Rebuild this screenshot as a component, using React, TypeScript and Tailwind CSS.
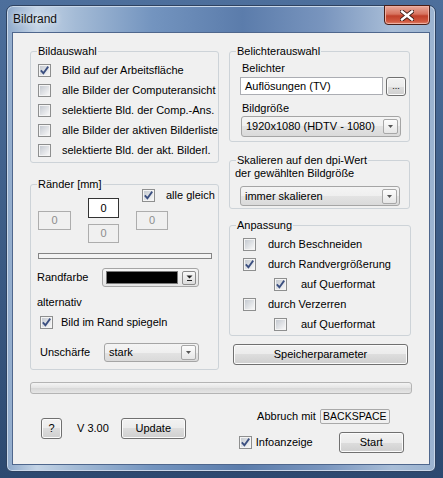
import type { ReactNode } from 'react';

function Check({ checked = false }: { checked?: boolean }) {
  return (
    <span className="flex h-[13px] w-[13px] shrink-0 items-center justify-center border border-[#8e8f8f] bg-[#f4f4f4]">
      <span className="flex h-[9px] w-[9px] items-center justify-center bg-[linear-gradient(135deg,#c5cad1,#f7f7f7)]">
        {checked && (
          <svg width="9" height="9" viewBox="0 0 9 9" className="overflow-visible">
            <path d="M0.8 4.3 L3.4 7.2 L8.2 0.6" fill="none" stroke="#3b4f80" strokeWidth="1.8" />
          </svg>
        )}
      </span>
    </span>
  );
}

function Group({ label, className, children }: { label: ReactNode; className: string; children?: ReactNode }) {
  return (
    <div className={`relative rounded-[3px] border border-[#cdd3d8] ${className}`}>
      <span className="absolute -top-[7px] left-[6px] bg-[#f0f0f0] px-[1px] leading-[13px]">{label}</span>
      {children}
    </div>
  );
}

function Btn({ children, className }: { children: ReactNode; className: string }) {
  return (
    <button
      type="button"
      className={`flex items-center justify-center rounded-[3px] border border-[#707070] bg-[linear-gradient(#f2f2f2_0%,#ebebeb_50%,#dddddd_50%,#cfcfcf_100%)] shadow-[inset_0_0_0_1px_#fbfbfb] ${className}`}
    >
      {children}
    </button>
  );
}

function Arrow() {
  return (
    <span className="flex h-[15px] w-[15px] shrink-0 items-center justify-center rounded-[2px] border border-[#a7a7a7] bg-[linear-gradient(#fdfdfd,#e6e6e6)]">
      <svg width="5" height="3" viewBox="0 0 5 3">
        <path d="M0 0h5L2.5 3z" fill="#555" />
      </svg>
    </span>
  );
}

function Combo({ value, className }: { value: string; className: string }) {
  return (
    <div
      className={`flex items-center rounded-[3px] border border-[#a5a5a5] bg-[linear-gradient(#f4f4f4_0%,#efefef_50%,#e3e3e3_50%,#dadada_100%)] pl-[4px] pr-[2px] ${className}`}
    >
      <span className="flex-1">{value}</span>
      <Arrow />
    </div>
  );
}

function Row({ checked, label, className }: { checked?: boolean; label: string; className: string }) {
  return (
    <div className={`flex h-[20px] items-center ${className}`}>
      <Check checked={checked} />
      <span>{label}</span>
    </div>
  );
}

function NumBox({ active, className }: { active?: boolean; className: string }) {
  return (
    <div
      className={
        active
          ? `flex items-center justify-center border border-[#333] bg-white text-black ${className}`
          : `flex items-center justify-center border border-[#adadad] bg-[#f0f0f0] text-[#8d8d8d] ${className}`
      }
    >
      0
    </div>
  );
}

export default function App() {
  return (
    <div className="h-[478px] w-[443px] overflow-hidden bg-[linear-gradient(#4d6f9c,#2c4970)] pl-[6px] pt-[5px] font-['Liberation_Sans',Arial,sans-serif] text-[11px] leading-none text-black">
      <div className="flex h-[467px] w-[430px] flex-col rounded-t-[7px] rounded-b-[6px] border border-[#2e4260] bg-[linear-gradient(to_right,#8ea9cb_0%,#c4d4e6_7%,#a4bbd6_16%,#7394bf_34%,#5b7cab_55%,#7995be_74%,#a8bdd7_90%,#9bb3d0_100%)] shadow-[inset_0_0_0_1px_#c9d8ea]">
        {/* title bar */}
        <div className="flex h-[26px] shrink-0 items-start">
          <span className="mt-[7px] pl-[6px] text-[12px] text-[#111] [text-shadow:0_0_6px_#ffffff]">Bildrand</span>
          <div className="ml-auto mr-[5px] -mt-[1px] flex h-[20px] w-[46px] items-center justify-center rounded-b-[4px] border border-[#4a1e16] bg-[linear-gradient(#e9a99b_0%,#d7735e_45%,#c0402a_55%,#d0583f_85%,#e0866f_100%)] shadow-[inset_0_0_0_1px_#efb0a2]">
            <svg width="14" height="11" viewBox="0 0 14 11">
              <path d="M2 1.5 L12 9.5 M12 1.5 L2 9.5" stroke="#3a1a14" strokeWidth="4.2" strokeLinecap="square" />
              <path d="M2 1.5 L12 9.5 M12 1.5 L2 9.5" stroke="#ffffff" strokeWidth="2.4" strokeLinecap="square" />
            </svg>
          </div>
        </div>

        {/* client area */}
        <div className="ml-[5px] flex h-[433px] w-[418px] flex-col border border-[#4f678d] bg-[#f0f0f0] pl-[17px] pt-[18px]">
          <div className="flex">
            {/* left column */}
            <div className="flex w-[189px] flex-col">
              <Group label="Bildauswahl" className="h-[112px] pl-[7px] pt-[8px]">
                <Row checked label="Bild auf der Arbeitsfläche" className="gap-[11px]" />
                <Row label="alle Bilder der Computeransicht" className="gap-[11px]" />
                <Row label="selektierte Bld. der Comp.-Ans." className="gap-[11px]" />
                <Row label="alle Bilder der aktiven Bilderliste" className="gap-[11px]" />
                <Row label="selektierte Bld. der akt. Bilderl." className="gap-[11px]" />
              </Group>

              <Group label="Ränder [mm]" className="mt-[21px] flex h-[186px] flex-col">
                <div className="mt-[4px] flex h-[13px] items-center gap-[11px] pl-[111px]">
                  <Check checked />
                  <span>alle gleich</span>
                </div>
                <div className="-mt-[4px] flex items-center pl-[7px]">
                  <NumBox className="h-[19px] w-[33px]" />
                  <div className="ml-[17px] flex flex-col gap-[6px]">
                    <NumBox active className="h-[20px] w-[31px]" />
                    <NumBox className="h-[19px] w-[31px]" />
                  </div>
                  <NumBox className="ml-[17px] h-[19px] w-[32px]" />
                </div>
                <div className="ml-[7px] mt-[10px] h-[6px] w-[174px] border border-[#858585] bg-[#f4f4f4]" />
                <div className="mt-[9px] flex h-[19px] items-center pl-[6px]">
                  <span className="w-[65px]">Randfarbe</span>
                  <div className="flex h-[19px] w-[97px] items-center rounded-[3px] border border-[#a5a5a5] bg-[linear-gradient(#f6f6f6,#e4e4e4)] pl-[3px]">
                    <span className="h-[13px] w-[72px] border border-[#7a7a7a] bg-black" />
                    <span className="ml-[4px] flex h-[14px] w-[14px] items-center justify-center rounded-[2px] border border-[#8d8d8d] bg-[linear-gradient(#fafafa,#dcdcdc)]">
                      <svg width="7" height="6" viewBox="0 0 7 6">
                        <path d="M0.5 0.5h6L3.5 3.5z" fill="#222" />
                        <path d="M1 5.5h5" stroke="#222" strokeWidth="1" />
                      </svg>
                    </span>
                  </div>
                </div>
                <div className="mt-[8px] flex h-[14px] items-center pl-[6px]">alternativ</div>
                <div className="mt-[6px] flex h-[14px] items-center gap-[8px] pl-[9px]">
                  <Check checked />
                  <span>Bild im Rand spiegeln</span>
                </div>
                <div className="mt-[14px] flex h-[19px] items-center pl-[9px]">
                  <span className="w-[64px]">Unschärfe</span>
                  <Combo value="stark" className="h-[19px] w-[95px]" />
                </div>
              </Group>
            </div>

            {/* right column */}
            <div className="ml-[10px] flex w-[182px] flex-col">
              <Group label="Belichterauswahl" className="h-[91px] w-[181px]">
                <div className="mt-[9px] flex h-[14px] items-center pl-[12px]">Belichter</div>
                <div className="mt-[2px] flex items-start pl-[10px]">
                  <div className="flex h-[18px] w-[143px] items-center border border-[#abadb3] bg-white pl-[4px]">Auflösungen (TV)</div>
                  <Btn className="ml-[3px] h-[19px] w-[20px] text-[9px]">...</Btn>
                </div>
                <div className="mt-[5px] flex h-[14px] items-center pl-[12px]">Bildgröße</div>
                <Combo value="1920x1080 (HDTV - 1080)" className="ml-[11px] mt-[1px] h-[21px] w-[160px]" />
              </Group>

              <div className="relative mt-[18px] h-[49px] w-[181px] rounded-[3px] border border-[#cdd3d8]">
                <span className="absolute -top-[7px] left-[6px] bg-[#f0f0f0] px-[1px] leading-[13px]">Skalieren auf den dpi-Wert</span>
                <div className="mt-[5px] flex h-[14px] items-center pl-[5px]">der gewählten Bildgröße</div>
                <Combo value="immer skalieren" className="ml-[10px] mt-[6px] h-[20px] w-[160px]" />
              </div>

              <Group label="Anpassung" className="mt-[16px] h-[111px] w-[182px] pl-[13px] pt-[8px]">
                <Row label="durch Beschneiden" className="gap-[12px]" />
                <Row checked label="durch Randvergrößerung" className="gap-[12px]" />
                <Row checked label="auf Querformat" className="gap-[14px] pl-[31px]" />
                <Row label="durch Verzerren" className="gap-[12px]" />
                <Row label="auf Querformat" className="gap-[14px] pl-[31px]" />
              </Group>

              <Btn className="ml-[4px] mt-[8px] h-[21px] w-[175px]">Speicherparameter</Btn>
            </div>
          </div>

          {/* progress bar */}
          <div className="mt-[12px] h-[12px] w-[382px] rounded-[3px] border border-[#b4b4b4] bg-[linear-gradient(#f4f4f4_0%,#e4e4e4_50%,#d8d8d8_55%,#e6e6e6_100%)]" />

          {/* bottom */}
          <div className="mt-[15px] flex items-start">
            <div className="ml-[11px] mt-[9px] flex items-center">
              <Btn className="h-[21px] w-[21px]">?</Btn>
              <span className="ml-[15px]">V 3.00</span>
              <Btn className="ml-[12px] h-[21px] w-[65px]">Update</Btn>
            </div>
            <div className="ml-[53px] flex w-[165px] flex-col">
              <div className="flex items-center justify-end pr-[14px]">
                <span>Abbruch mit</span>
                <span className="ml-[4px] flex h-[15px] w-[70px] items-center justify-center rounded-[2px] border border-[#a9a9a9] text-[10.5px]">BACKSPACE</span>
              </div>
              <div className="mt-[8px] flex items-center">
                <Check checked />
                <span className="ml-[4px]">Infoanzeige</span>
                <Btn className="ml-auto h-[21px] w-[65px]">Start</Btn>
              </div>
            </div>
          </div>
        </div>
      </div>
    </div>
  );
}
